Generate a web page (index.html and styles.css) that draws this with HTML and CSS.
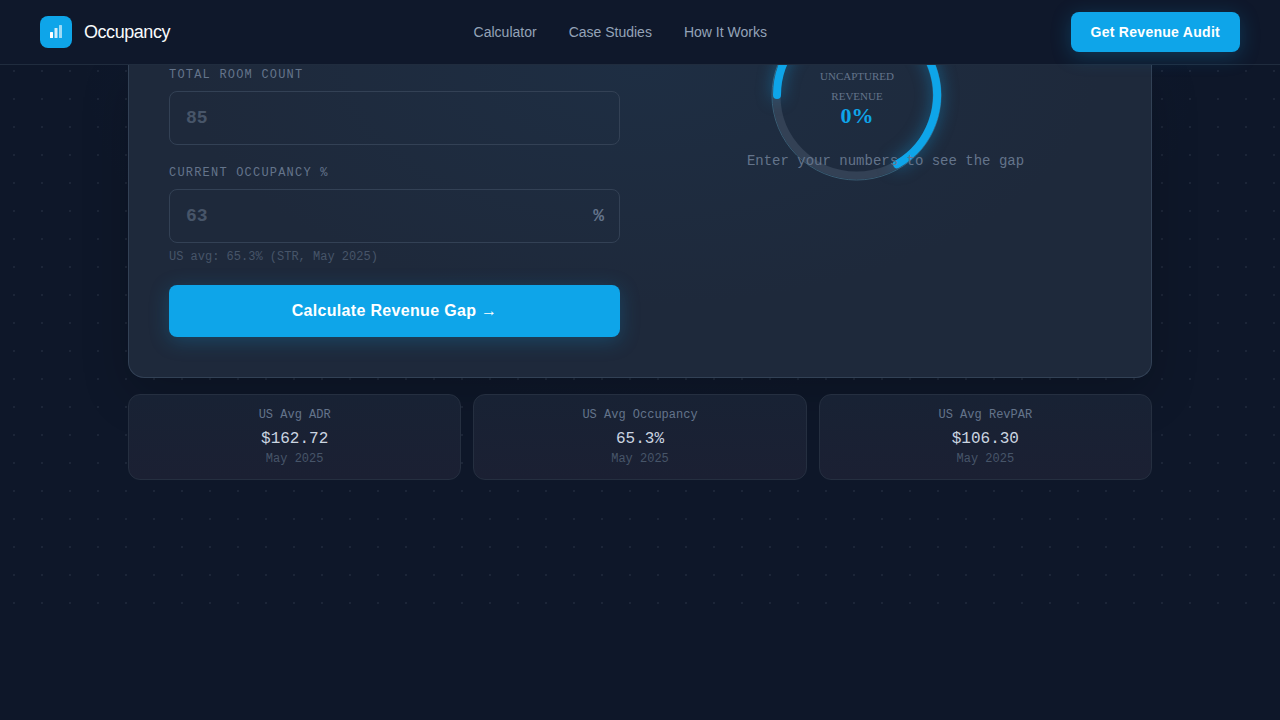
FILE: index.html
```html
<!DOCTYPE html>
<html lang="en">
<head>
    <meta charset="UTF-8">
    <meta name="viewport" content="width=device-width, initial-scale=1.0">
    <title>Occupancy</title>
    <link rel="stylesheet" href="styles.css">
</head>
<body>

    <header class="header">
        <a class="logo" href="#">
            <span class="logo-mark">
                <svg width="14" height="14" viewBox="0 0 14 14" fill="#fff" aria-hidden="true">
                    <rect x="1" y="7" width="3" height="6" rx="0.5"/>
                    <rect x="5.5" y="3" width="3" height="10" rx="0.5" opacity="0.8"/>
                    <rect x="10" y="0" width="3" height="13" rx="0.5" opacity="0.6"/>
                </svg>
            </span>
            Occupancy
        </a>
        <nav class="nav">
            <a href="#calculator">Calculator</a>
            <a href="#cases">Case Studies</a>
            <a href="#how">How It Works</a>
        </nav>
        <button class="btn btn-small" type="button">Get Revenue Audit</button>
    </header>

    <main class="hero">
        <div class="content">
            <section class="card" id="calculator">
                <form class="form">
                    <label class="label" for="rooms">TOTAL ROOM COUNT</label>
                    <div class="field">
                        <input class="input" type="text" id="rooms" placeholder="85">
                    </div>
                    <label class="label label-next" for="occupancy">CURRENT OCCUPANCY %</label>
                    <div class="field">
                        <input class="input" type="text" id="occupancy" placeholder="63">
                        <span class="suffix">%</span>
                    </div>
                    <p class="hint">US avg: 65.3% (STR, May 2025)</p>
                    <button class="btn btn-large" type="button">Calculate Revenue Gap →</button>
                </form>
                <div class="result">
                    <div class="gauge">
                        <svg class="ring" viewBox="0 0 200 200" aria-hidden="true">
                            <circle class="ring-track" cx="99.5" cy="99.5" r="80"/>
                            <circle class="ring-edge" cx="99.5" cy="99.5" r="84.5"/>
                            <path class="ring-value" d="M20 99A80 80 0 1 1 140 168.28"/>
                        </svg>
                        <div class="gauge-text">
                            <span class="gauge-label">UNCAPTURED</span>
                            <span class="gauge-label">REVENUE</span>
                            <strong class="gauge-number">0%</strong>
                        </div>
                    </div>
                    <p class="prompt">Enter your numbers to see the gap</p>
                </div>
            </section>

            <section class="stats">
                <div class="stat">
                    <span class="stat-label">US Avg ADR</span>
                    <span class="stat-value">$162.72</span>
                    <span class="stat-date">May 2025</span>
                </div>
                <div class="stat">
                    <span class="stat-label">US Avg Occupancy</span>
                    <span class="stat-value">65.3%</span>
                    <span class="stat-date">May 2025</span>
                </div>
                <div class="stat">
                    <span class="stat-label">US Avg RevPAR</span>
                    <span class="stat-value">$106.30</span>
                    <span class="stat-date">May 2025</span>
                </div>
            </section>
        </div>
    </main>

</body>
</html>
```
FILE: styles.css
```css
* {
    box-sizing: border-box;
}
body {
    margin: 0;
    background-color: #0e1729;
    color: #f8fafc;
    font-family: "Liberation Sans", Arial, sans-serif;
}
a {
    color: inherit;
    text-decoration: none;
}
p {
    margin: 0;
}

/* header */
.header {
    position: sticky;
    top: 0;
    z-index: 10;
    display: flex;
    align-items: center;
    justify-content: space-between;
    padding: 12px 40px;
    background-color: #0f182b;
    border-bottom: 1px solid #202c3e;
}
.logo {
    display: flex;
    align-items: center;
    gap: 12px;
    font-size: 18px;
    letter-spacing: -0.025em;
}
.logo-mark {
    display: flex;
    align-items: center;
    justify-content: center;
    width: 32px;
    height: 32px;
    border-radius: 8px;
    background-color: #0ea5e9;
}
.nav {
    display: flex;
    gap: 32px;
    font-size: 14px;
    color: #94a3b8;
}
.btn {
    border: none;
    border-radius: 8px;
    background-color: #0ea5e9;
    color: #fff;
    font-family: inherit;
    font-weight: bold;
    letter-spacing: 0.02em;
    cursor: pointer;
    box-shadow: 0 4px 20px rgba(14, 165, 233, 0.25);
}
.btn-small {
    height: 40px;
    padding: 0 20px;
    font-size: 14px;
}
.btn-large {
    width: 100%;
    height: 52px;
    margin-top: 18px;
    font-size: 16px;
}

/* calculator */
.hero {
    padding: 0 40px 128px;
    background-image:
        radial-gradient(ellipse 560px 340px at 50% 0, rgba(30, 64, 130, 0.2), transparent),
        radial-gradient(circle, rgba(148, 163, 184, 0.1) 1px, transparent 1px);
    background-size: auto, 28px 28px;
    background-position: 0 0, 0 -8px;
}
.content {
    max-width: 1024px;
    margin: 0 auto;
}
.card {
    display: grid;
    grid-template-columns: 1fr 1fr;
    gap: 40px;
    padding: 0 40px 40px;
    border: 1px solid #324155;
    border-top: none;
    border-radius: 0 0 16px 16px;
    background: radial-gradient(ellipse 460px 240px at 50% 0, #1e2e43, #1e293b);
    box-shadow: 0 16px 48px rgba(0, 0, 0, 0.2);
}
.label {
    display: block;
    margin-bottom: 6px;
    color: #64748b;
    font-family: "Liberation Mono", monospace;
    font-size: 12px;
    line-height: 20px;
    letter-spacing: 0.1em;
}
.label-next {
    margin-top: 18px;
}
.field {
    position: relative;
}
.input {
    display: block;
    width: 100%;
    height: 54px;
    padding: 0 16px;
    border: 1px solid #334155;
    border-radius: 8px;
    background-color: transparent;
    color: #f8fafc;
    font-family: "Liberation Mono", monospace;
    font-size: 18px;
    font-weight: bold;
}
.input::placeholder {
    color: #475569;
}
.suffix {
    position: absolute;
    top: 0;
    right: 16px;
    color: #64748b;
    font-family: "Liberation Mono", monospace;
    font-size: 18px;
    font-weight: bold;
    line-height: 54px;
}
.hint {
    margin-top: 4px;
    color: #475569;
    font-family: "Liberation Mono", monospace;
    font-size: 12px;
    line-height: 20px;
}

/* gauge */
.result {
    position: relative;
    padding-top: 86px;
}
.gauge {
    position: absolute;
    top: -69px;
    left: 97px;
    width: 200px;
    height: 200px;
    font-family: "Liberation Serif", serif;
}
.ring {
    display: block;
    width: 100%;
    height: 100%;
    overflow: visible;
    fill: none;
}
.ring-edge {
    stroke: #3a5c73;
    stroke-width: 1;
}
.ring-track {
    stroke: #334155;
    stroke-width: 8;
}
.ring-value {
    stroke: #0ea5e9;
    stroke-width: 8;
    stroke-linecap: round;
    filter: drop-shadow(0 0 8px rgba(14, 165, 233, 0.5));
}
.gauge-text {
    position: absolute;
    inset: 70px 0 0;
    display: flex;
    flex-direction: column;
    align-items: center;
    line-height: 20px;
}
.gauge-label {
    color: #64748b;
    font-size: 11px;
}
.gauge-number {
    color: #0ea5e9;
    font-size: 22px;
}
.prompt {
    position: relative;
    color: #64748b;
    font-family: "Liberation Mono", monospace;
    font-size: 14px;
    line-height: 20px;
    text-align: center;
}

/* market averages */
.stats {
    display: grid;
    grid-template-columns: repeat(3, 1fr);
    gap: 12px;
    margin-top: 16px;
}
.stat {
    display: flex;
    flex-direction: column;
    align-items: center;
    padding: 12px 16px;
    border: 1px solid #252f40;
    border-radius: 12px;
    background: linear-gradient(#182234, #1b2033);
    font-family: "Liberation Mono", monospace;
    font-size: 12px;
    line-height: 16px;
}
.stat-label {
    color: #64748b;
}
.stat-value {
    margin-top: 4px;
    color: #cbd5e1;
    font-size: 16px;
    line-height: 24px;
}
.stat-date {
    color: #475569;
}
```
